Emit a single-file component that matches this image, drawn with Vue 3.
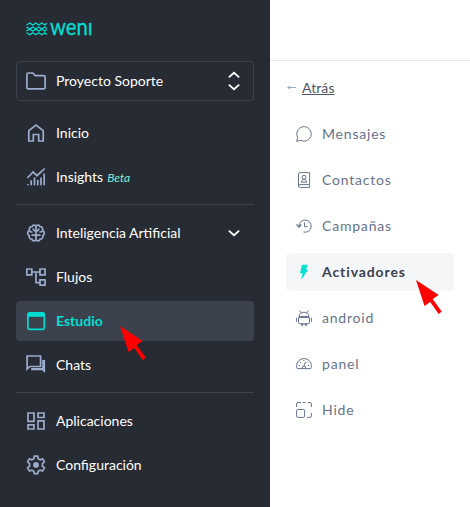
<script setup>
const groups = [
  [
    { id: 'home', label: 'Inicio' },
    { id: 'insights', label: 'Insights', tag: 'Beta' },
  ],
  [
    { id: 'brain', label: 'Inteligencia Artificial', expandable: true },
    { id: 'flows', label: 'Flujos' },
    { id: 'studio', label: 'Estudio', active: true },
    { id: 'chats', label: 'Chats' },
  ],
  [
    { id: 'apps', label: 'Aplicaciones' },
    { id: 'settings', label: 'Configuración' },
  ],
]

const icons = {
  home: '<path d="M2.800 7.600 10 2l7.200 5.600V18h-4.500v-6.500H7.300V18H2.800z"/>',
  insights: '<path d="M1.300 11 7.200 5l3.700 3.700 7.800-7.200M2 17v1.200M5.200 13.300v5M8.500 10.500v7.800M11.800 13v5.300M15 10.500v7.800M18.200 6.500v11.800"/>',
  brain: '<path d="M10 2.500v15M10 3.500C9.500 1.600 6.500 1.500 6 3.600 3.700 3.500 2.700 5.800 3.500 7.300 1.100 8.500 1.100 11.600 3.200 12.700 2.700 14.800 4.300 16.300 6 16.300 6.500 18.500 9.500 18.400 10 16.500M10 3.500C10.500 1.600 13.500 1.500 14 3.600 16.300 3.500 17.300 5.800 16.500 7.300 18.900 8.500 18.900 11.600 16.800 12.700 17.300 14.800 15.700 16.300 14 16.300 13.500 18.500 10.500 18.400 10 16.500M3.500 7.700C4 9 5.300 9.100 6.500 9M16.500 7.700C16 9 14.700 9.100 13.500 9M10 8C8 8 7.200 6.500 7.200 5.500M10 8C12 8 12.800 6.500 12.800 5.500M5.800 13C6.300 11.500 8.500 11.500 9.500 13M14.200 13C13.700 11.500 11.500 11.500 10.500 13"/>',
  flows: '<path d="M.8 2h5v5.800h-5zM14 2h5v5.800h-5zM14 12.800h5v5.400h-5zM6 5h8M10 5v10.600h4"/>',
  studio: '<rect x="1.900" y="1.900" width="16.400" height="16.400" rx="1.500"/><path d="M2 4h16" stroke-width="3.600"/>',
  chats: '<path d="M1.100 1h13.500v10.500H3.800L1.100 14z"/><path d="M16.200 5h2.900v13l-3-2.800H5.200v-2.300h11z" fill="currentColor" stroke="none"/>',
  apps: '<path d="M2 2h6v8.300H2zM12 2h6v4.500h-6zM12 9.800h6V18h-6zM2 13.800h6V18H2z"/>',
  settings: '<path d="M8.300 1.100h3.400l.5 2.600 1.900 1.100 2.500-.9 1.800 3-2 1.700v2.500l2 1.900-1.800 3-2.500-.9-1.900 1.100-.5 2.500H8.300l-.5-2.500-1.900-1.100-2.500.9-1.800-3 2-1.900V8.600l-2-1.700 1.800-3 2.500.9 1.900-1.100z"/><circle cx="10" cy="9.900" r="2.900" fill="currentColor" stroke="none"/>',
}

const links = [
  { id: 'message', label: 'Mensajes' },
  { id: 'contact', label: 'Contactos' },
  { id: 'history', label: 'Campañas' },
  { id: 'bolt', label: 'Activadores', active: true },
  { id: 'android', label: 'android' },
  { id: 'gauge', label: 'panel' },
  { id: 'resize', label: 'Hide' },
]

const linkIcons = {
  message: '<path d="M.7 15.300 1.700 11.300A7.200 7.200 0 1 1 4.800 14.300z"/>',
  contact: '<path d="M2.500 13.700V2Q2.500.6 3.900.6h9.700v12H3.800Q2.500 12.600 2.500 14t1.300 1.400h9.800v-2.800M5.400 10.200c.1-1.900 1-2.500 2.600-2.700 1.600.2 2.500.8 2.600 2.700z"/><circle cx="8" cy="5.300" r="2"/>',
  history: '<path d="M3 8.200A6.100 6.100 0 1 1 7.500 14M8.500 4.500v4.200h3.200"/><path d="m.5 6.500 2.500 2.500 2.300-2.500" stroke-width="1.300"/>',
  bolt: '<path d="M6 .7h6L9.900 5.500h2.300L5.300 15.700l1.300-6.500H3.900z" fill="currentColor" stroke="none"/>',
  android: '<path d="M3 6.500a5 4.300 0 0 1 10 0zM2.500 7.600h11v4.900q0 1.200-1.200 1.200H3.700q-1.200 0-1.200-1.200zM5.500 13.700v1.700h1.300v-1.700M9.200 13.700v1.700h1.300v-1.700M5 2.800 3.800.5M11 2.800 12.200.5M.6 7.700v4.200M15.400 7.700v4.200M6 4.700v.5M10 4.700v.5"/>',
  gauge: '<path d="M1.300 12.600Q.5 11.500.6 9.700a7.400 7.100 0 0 1 14.800 0q.1 1.800-.7 2.900zM2.800 9.500h1.300M4 6l1 .8M7.900 4v1.300M11.500 5.700l-.8.900M13.200 9.500h-1.300M6.500 12.500Q5.500 10.500 8 10q2.500.5 1.500 2.500M8 10l1.500-4"/>',
  resize: '<path d="M.6 5V2Q.6.6 2 .6h3M6.500.6h3M11.500.6H14Q15.400.6 15.400 2v3M15.400 11v3q0 1.400-1.400 1.400h-3"/><rect x=".6" y="7.500" width="8" height="7.900" rx="1.200"/>',
}
</script>

<template>
  <div class="layout">
    <aside class="sidebar">
      <svg class="logo" width="72" height="26" viewBox="0 0 72 26">
        <path class="wave" d="m.5 9 3.300-2 3 2 3-2 3 2 3-2 3 2 2-1.700M.5 11l3.300 2 3-2 3 2 3-2 3 2 3-2 2 1.500M.5 14.800l3.300-1.600 3 1.800 3-1.800 3 1.800 3-1.800 3 1.800 2-1.500M.5 16.800l3.300 2 3-2 3 2 3-2 3 2 3-2 2 1.700" />
        <text x="24" y="18.800" textLength="42.500" lengthAdjust="spacingAndGlyphs">weni</text>
        <rect class="dot-cover" x="61" y="0" width="8" height="6.500" />
      </svg>

      <button class="project" type="button">
        <svg class="icon" viewBox="0 0 20 20">
          <path d="M.9 3.300Q.9 2 2.200 2h4.600l2.400 2.600h8.600q1.300 0 1.300 1.300v10.600q0 1.300-1.300 1.300H2.200q-1.300 0-1.300-1.300z" />
        </svg>
        <span>Proyecto Soporte</span>
        <svg class="chevrons" width="12" height="20" viewBox="0 0 12 20">
          <path d="m.8 6.400L6 1.800l5.200 4.600M.8 13.600 6 18.200l5.200-4.600" />
        </svg>
      </button>

      <nav>
        <ul v-for="(group, index) in groups" :key="index" class="group">
          <li v-for="item in group" :key="item.id" class="item" :class="{ active: item.active }">
            <svg class="icon" viewBox="0 0 20 20" v-html="icons[item.id]" />
            <span>{{ item.label }}</span>
            <em v-if="item.tag">{{ item.tag }}</em>
            <svg v-if="item.expandable" class="chevrons" width="12" height="8" viewBox="0 0 12 8">
              <path d="M.8 1.600 6 6.200l5.200-4.600" />
            </svg>
          </li>
        </ul>
      </nav>
    </aside>

    <main class="content">
      <header class="topbar"></header>
      <div class="back">
        <svg width="10" height="6" viewBox="0 0 10 6">
          <path d="M0 2.500 3 .5v4z" fill="currentColor" /><path d="M1 2.500h8" stroke="currentColor" />
        </svg>
        <a>Atrás</a>
      </div>
      <ul class="links">
        <li v-for="link in links" :key="link.id" class="link" :class="{ active: link.active }">
          <svg class="link-icon" viewBox="0 0 16 16" v-html="linkIcons[link.id]" />
          <span>{{ link.label }}</span>
        </li>
      </ul>
    </main>

    <svg class="pointer pointer-left" width="27" height="36" viewBox="0 0 27 36">
      <path d="m0 0 22.700 15-6 4 9 12.500-3 2.500-8.500-12-5.700 4z" />
    </svg>
    <svg class="pointer pointer-right" width="27" height="36" viewBox="0 0 27 36">
      <path d="m0 0 22.700 15-6 4 9 12.500-3 2.500-8.500-12-5.700 4z" />
    </svg>
  </div>
</template>

<style>
body {
  background: #fff;
}
</style>

<style scoped>
.layout {
  position: relative;
  display: flex;
  width: 470px;
  height: 507px;
  overflow: hidden;
  font-family: Lato, sans-serif;
  font-size: 14px;
  line-height: 20px;
}

ul {
  margin: 0;
  padding: 0;
  list-style: none;
}

svg {
  flex: none;
  display: block;
}

.sidebar {
  box-sizing: border-box;
  flex: none;
  width: 270px;
  padding: 16px 16px 0;
  background: #272b33;
  color: #fff;
}

.logo {
  margin: 0 0 19px 10px;
  overflow: visible;
}

.logo text {
  fill: #00ded2;
  stroke: #00ded2;
  stroke-width: 0.3;
  font: 400 23px Lato, sans-serif;
}

.dot-cover {
  fill: #272b33;
}

.wave {
  fill: none;
  stroke: #00ded2;
  stroke-width: 1.3;
}

.project {
  box-sizing: border-box;
  display: flex;
  align-items: center;
  gap: 10px;
  width: 100%;
  height: 40px;
  margin-bottom: 12px;
  padding: 0 13px 0 9px;
  border: 1px solid #3b414d;
  border-radius: 4px;
  background: transparent;
  color: inherit;
  font: inherit;
}

.icon {
  width: 20px;
  height: 20px;
  fill: none;
  stroke: currentColor;
  stroke-width: 1.7;
  color: #9caccc;
}

.chevrons {
  margin-left: auto;
  fill: none;
  stroke: #fff;
  stroke-width: 1.8;
}

.group {
  display: flex;
  flex-direction: column;
  gap: 4px;
}

.group + .group {
  margin-top: 7px;
  padding-top: 8px;
  border-top: 1px solid #3b414d;
}

.item {
  display: flex;
  align-items: center;
  gap: 10px;
  height: 40px;
  padding: 0 14px 0 10px;
  border-radius: 4px;
}

.item em {
  margin-left: -6px;
  padding-top: 1px;
  color: #7eeed5;
  font-size: 12px;
}

.item.active {
  background: #3b414d;
  color: #00ded2;
  font-weight: 700;
}

.item.active .icon {
  color: #00ded2;
}

.content {
  flex: 1;
  background: #fff;
  color: #67738b;
}

.topbar {
  height: 60px;
  border-bottom: 1px solid #e2e6ed;
}

.back {
  display: flex;
  align-items: center;
  gap: 5px;
  margin: 17px 0 17px 17px;
  color: #9caccc;
}

.back a {
  color: #4e5666;
  letter-spacing: 0.1px;
  text-decoration: underline;
}

.links {
  display: flex;
  flex-direction: column;
  gap: 8px;
  padding: 0 16px;
}

.link {
  display: flex;
  align-items: center;
  gap: 10px;
  height: 38px;
  padding: 0 10px;
  border-radius: 4px;
  letter-spacing: 0.8px;
}

.link-icon {
  width: 16px;
  height: 16px;
  fill: none;
  stroke: currentColor;
  stroke-width: 1;
}

.link.active {
  background: #f4f6f8;
  color: #3b414d;
  font-weight: 700;
  letter-spacing: 0.9px;
}

.link.active .link-icon {
  color: #00ded2;
}

.pointer {
  position: absolute;
  fill: #f00;
}

.pointer-left {
  left: 120px;
  top: 326px;
}

.pointer-right {
  left: 416px;
  top: 280px;
}
</style>
